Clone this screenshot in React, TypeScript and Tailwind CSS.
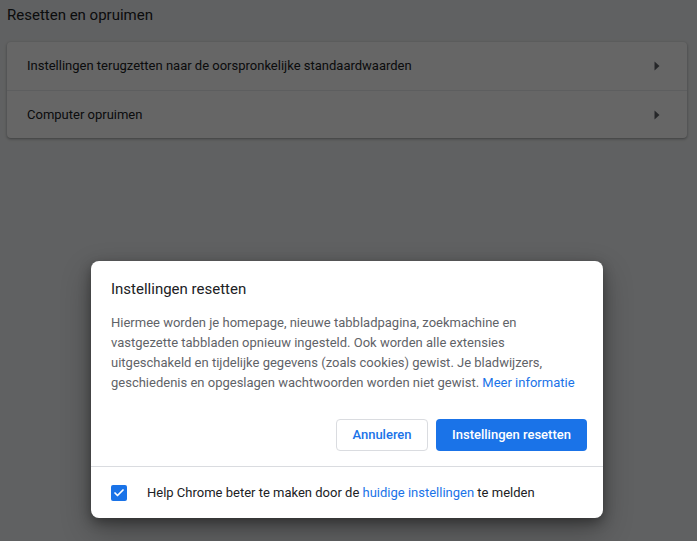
import { Check } from 'lucide-react';

const rows = [
  'Instellingen terugzetten naar de oorspronkelijke standaardwaarden',
  'Computer opruimen',
];

function Arrow() {
  return (
    <svg width="6" height="10" viewBox="0 0 6 10" className="text-[#5f6368]">
      <path d="M0.5 0.5 L5.5 5 L0.5 9.5 Z" fill="currentColor" />
    </svg>
  );
}

export default function App() {
  return (
    <div className="relative h-[541px] w-[697px] overflow-hidden bg-[#f1f3f4] font-['Roboto','Liberation_Sans',sans-serif] text-[#202124]">
      <div className="px-[7px] pt-[5px]">
        <h2 className="text-[15px] leading-[20px] text-[#202124]">Resetten en opruimen</h2>
        <div className="mt-[17px] w-[680px] rounded-[4px] bg-white shadow-[0_1px_2px_rgba(60,64,67,0.3),0_1px_3px_1px_rgba(60,64,67,0.15)]">
          {rows.map((row, i) => (
            <div
              key={row}
              className={`flex h-[48px] items-center justify-between pl-[20px] pr-[27px] text-[13px] ${i > 0 ? 'border-t border-[#e8eaed]' : ''}`}
            >
              <span>{row}</span>
              <Arrow />
            </div>
          ))}
        </div>
      </div>

      {/* modal scrim */}
      <div className="absolute inset-0 bg-black/60" />

      <div className="absolute left-[91px] top-[261px] w-[512px] rounded-[8px] bg-white shadow-[0_4px_12px_rgba(0,0,0,0.35),0_12px_30px_rgba(0,0,0,0.3)]">
        <div className="px-[20px] pt-[18px]">
          <h3 className="text-[15px] leading-[20px] text-[#202124]">Instellingen resetten</h3>
          <p className="mt-[14px] text-[13px] leading-[20px] text-[#5f6368]">
            Hiermee worden je homepage, nieuwe tabbladpagina, zoekmachine en vastgezette tabbladen opnieuw ingesteld. Ook worden alle extensies uitgeschakeld en tijdelijke gegevens (zoals cookies) gewist. Je bladwijzers, geschiedenis en opgeslagen wachtwoorden worden niet gewist.{' '}
            <a className="text-[#1a73e8]">Meer informatie</a>
          </p>
        </div>
        <div className="flex justify-end gap-[8px] px-[16px] pb-[15px] pt-[26px]">
          <button className="h-[32px] w-[92px] rounded-[4px] border border-[#dadce0] bg-white text-[13px] font-medium text-[#1a73e8]">
            Annuleren
          </button>
          <button className="h-[32px] w-[151px] rounded-[4px] bg-[#1a73e8] text-[13px] font-medium text-white">
            Instellingen resetten
          </button>
        </div>
        <div className="flex h-[52px] items-center gap-[20px] border-t border-[#dadce0] px-[20px] text-[13px] text-[#202124]">
          <span className="flex h-[16px] w-[16px] items-center justify-center rounded-[2px] bg-[#1a73e8]">
            <Check className="h-[12px] w-[12px] text-white" strokeWidth={3.5} />
          </span>
          <span>
            Help Chrome beter te maken door de <a className="text-[#1a73e8]">huidige instellingen</a> te melden
          </span>
        </div>
      </div>
    </div>
  );
}
